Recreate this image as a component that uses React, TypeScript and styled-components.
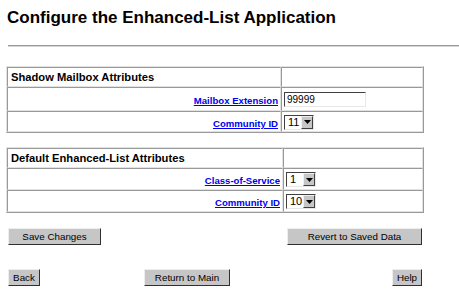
import React from "react";
import styled, { createGlobalStyle } from "styled-components";

const GlobalStyle = createGlobalStyle`
  body {
    margin: 0;
    background: #ffffff;
    color: #000000;
    font-family: "Liberation Sans", Arial, sans-serif;
  }
`;

const Page = styled.div`
  padding-top: 8px;
  width: 100%;
`;

const Title = styled.h1`
  margin: 0 0 0 7px;
  font-size: 17px;
  line-height: 20px;
  font-weight: bold;
`;

const Rule = styled.div`
  margin: 17px 0 0 8px;
  height: 2px;
  box-sizing: border-box;
  border-top: 1px solid #9a9a9a;
  border-bottom: 1px solid #d6d6d6;
`;

const Table = styled.table<{ $top: number }>`
  margin: ${(p) => p.$top}px 0 0 6px;
  width: 418px;
  border-collapse: separate;
  border-spacing: 0;
  border: 1px solid;
  border-color: #e2e2e2 #999999 #999999 #e2e2e2;
`;

const Cell = styled.td<{ $h: number; $w?: number; $right?: boolean }>`
  height: ${(p) => p.$h}px;
  width: ${(p) => (p.$w ? `${p.$w}px` : "auto")};
  padding: 0 2px;
  border: 1px solid;
  border-color: #999999 #e2e2e2 #e2e2e2 #999999;
  text-align: ${(p) => (p.$right ? "right" : "left")};
  vertical-align: middle;
`;

const HeadText = styled.span`
  display: block;
  padding-left: 1px;
  font-size: 11.2px;
  font-weight: bold;
`;

const FieldLink = styled.a`
  font-size: 9.6px;
  font-weight: bold;
  color: #0000ee;
  text-decoration: underline;
`;

const TextBox = styled.input`
  display: block;
  width: 82px;
  height: 15px;
  box-sizing: border-box;
  margin: 0;
  padding: 0 2px;
  font-family: "Liberation Sans", Arial, sans-serif;
  font-size: 10px;
  color: #000;
  background: #fff;
  border: 1px solid;
  border-color: #404040 #e8e8e8 #e8e8e8 #404040;
  outline: none;
`;

const SelectBox = styled.span`
  display: inline-flex;
  align-items: stretch;
  width: 30px;
  height: 15px;
  box-sizing: border-box;
  vertical-align: middle;
  background: #fff;
  border: 1px solid;
  border-color: #404040 #e8e8e8 #e8e8e8 #404040;
`;

const SelectValue = styled.span`
  flex: 1;
  padding-left: 3px;
  font-size: 11px;
  line-height: 13px;
`;

const SelectArrow = styled.span`
  width: 12px;
  display: flex;
  align-items: center;
  justify-content: center;
  background: #c6c6c6;
  box-sizing: border-box;
  border: 1px solid;
  border-color: #f0f0f0 #404040 #404040 #f0f0f0;
`;

const ButtonRow = styled.div<{ $top: number }>`
  margin: ${(p) => p.$top}px 0 0 8px;
  width: 414px;
  display: flex;
  justify-content: space-between;
`;

const NavRow = styled.div`
  margin: 24px 0 0 8px;
  width: 414px;
  display: grid;
  grid-template-columns: 136px 1fr auto;
  align-items: start;
`;

const Button = styled.button<{ $w: number }>`
  width: ${(p) => p.$w}px;
  height: 17px;
  margin: 0;
  padding: 0;
  box-sizing: border-box;
  background: #c6c6c6;
  border: 1px solid;
  border-color: #eeeeee #303030 #303030 #eeeeee;
  font-family: "Liberation Sans", Arial, sans-serif;
  font-size: 9.8px;
  color: #000;
  line-height: 14px;
  text-align: center;
`;

const Dropdown: React.FC<{ value: string }> = ({ value }) => (
  <SelectBox>
    <SelectValue>{value}</SelectValue>
    <SelectArrow>
      <svg width="7" height="4" viewBox="0 0 7 4">
        <path d="M0 0h7L3.5 4z" fill="#000" />
      </svg>
    </SelectArrow>
  </SelectBox>
);

const App: React.FC = () => {
  return (
    <Page>
      <GlobalStyle />
      <Title>Configure the Enhanced-List Application</Title>
      <Rule />

      <Table $top={19}>
        <tbody>
          <tr>
            <Cell $h={18} $w={268}>
              <HeadText>Shadow Mailbox Attributes</HeadText>
            </Cell>
            <Cell $h={18}></Cell>
          </tr>
          <tr>
            <Cell $h={22} $right>
              <FieldLink href="#">Mailbox Extension</FieldLink>
            </Cell>
            <Cell $h={22}>
              <TextBox defaultValue="99999" />
            </Cell>
          </tr>
          <tr>
            <Cell $h={19} $right>
              <FieldLink href="#">Community ID</FieldLink>
            </Cell>
            <Cell $h={19}>
              <Dropdown value="11" />
            </Cell>
          </tr>
        </tbody>
      </Table>

      <Table $top={14}>
        <tbody>
          <tr>
            <Cell $h={18} $w={270}>
              <HeadText>Default Enhanced-List Attributes</HeadText>
            </Cell>
            <Cell $h={18}></Cell>
          </tr>
          <tr>
            <Cell $h={20} $right>
              <FieldLink href="#">Class-of-Service</FieldLink>
            </Cell>
            <Cell $h={20}>
              <Dropdown value="1" />
            </Cell>
          </tr>
          <tr>
            <Cell $h={20} $right>
              <FieldLink href="#">Community ID</FieldLink>
            </Cell>
            <Cell $h={20}>
              <Dropdown value="10" />
            </Cell>
          </tr>
        </tbody>
      </Table>

      <ButtonRow $top={15}>
        <Button $w={93}>Save Changes</Button>
        <Button $w={135}>Revert to Saved Data</Button>
      </ButtonRow>

      <NavRow>
        <Button $w={32}>Back</Button>
        <Button $w={86}>Return to Main</Button>
        <Button $w={30}>Help</Button>
      </NavRow>
    </Page>
  );
};

export default App;
